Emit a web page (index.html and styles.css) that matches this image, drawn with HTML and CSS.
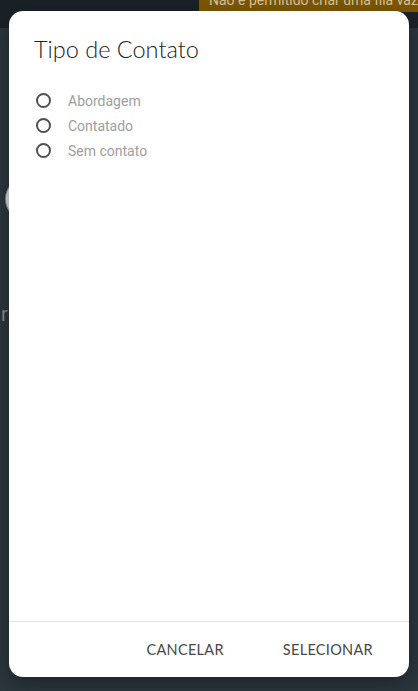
FILE: index.html
```html
<!DOCTYPE html>
<html lang="pt-BR">
<head>
<meta charset="utf-8">
<title>Tipo de Contato</title>
<link rel="stylesheet" href="styles.css">
</head>
<body>
<div class="app">
  <header class="topbar">
    <div class="banner">Não é permitido criar uma fila vazia</div>
  </header>
  <main class="content">
    <div class="avatar"></div>
    <div class="stray">r</div>
  </main>
</div>

<div class="dialog" role="dialog" aria-labelledby="dlg-title">
  <h2 class="dialog-title" id="dlg-title">Tipo de Contato</h2>
  <div class="dialog-body">
    <label class="radio-row"><span class="radio"></span><span class="radio-label">Abordagem</span></label>
    <label class="radio-row"><span class="radio"></span><span class="radio-label">Contatado</span></label>
    <label class="radio-row"><span class="radio"></span><span class="radio-label">Sem contato</span></label>
  </div>
  <div class="dialog-actions">
    <button class="btn">CANCELAR</button>
    <button class="btn">SELECIONAR</button>
  </div>
</div>
</body>
</html>
```

FILE: styles.css
```css
html, body {
  margin: 0;
  padding: 0;
  height: 100%;
}
body {
  background: #2b363d;
  font-family: Roboto, "Liberation Sans", sans-serif;
  overflow: hidden;
}
.app {
  height: 691px;
  display: flex;
  flex-direction: column;
}
.topbar {
  height: 28px;
  background: #1b2227;
  position: relative;
  overflow: hidden;
}
.banner {
  position: absolute;
  left: 199px;
  right: 0;
  top: -9px;
  height: 21px;
  background: #7f5700;
  color: #d4c49c;
  font-size: 14px;
  line-height: 18px;
  padding-left: 10px;
  white-space: nowrap;
  overflow: hidden;
}
.content {
  flex: 1;
  position: relative;
}
.avatar {
  position: absolute;
  left: 5px;
  top: 148px;
  width: 44px;
  height: 44px;
  border-radius: 50%;
  background: #d9d9d9;
  border: 1px solid #888;
}
.stray {
  position: absolute;
  left: 1px;
  top: 274px;
  font-size: 20px;
  color: #888;
}

.dialog {
  position: absolute;
  left: 9px;
  top: 11px;
  width: 400px;
  height: 666px;
  background: #fff;
  border-radius: 14px;
  box-shadow: 0 6px 20px rgba(0,0,0,0.35);
  display: flex;
  flex-direction: column;
  overflow: hidden;
}
.dialog-title {
  margin: 0;
  padding: 22px 25px 0;
  font-family: Lato, "Open Sans", sans-serif;
  font-weight: 300;
  font-size: 23.5px;
  line-height: 32px;
  color: #222;
}
.dialog-body {
  flex: 1;
  padding: 23px 0 0 27px;
  display: flex;
  flex-direction: column;
}
.radio-row {
  display: flex;
  align-items: center;
  height: 25px;
}
.radio {
  width: 11px;
  height: 11px;
  border: 2px solid #505050;
  border-radius: 50%;
  flex: none;
}
.radio-label {
  margin-left: 17px;
  font-size: 14px;
  color: #9e9e9e;
}
.dialog-actions {
  height: 55px;
  border-top: 1px solid #e2e2e2;
  display: flex;
  justify-content: flex-end;
  align-items: center;
  padding-right: 20px;
  gap: 27px;
}
.btn {
  border: none;
  background: none;
  padding: 0 16px;
  font-family: Lato, "Open Sans", sans-serif;
  font-weight: 400;
  font-size: 14.5px;
  letter-spacing: 0.3px;
  color: #474747;
  height: 36px;
  cursor: pointer;
}
```
